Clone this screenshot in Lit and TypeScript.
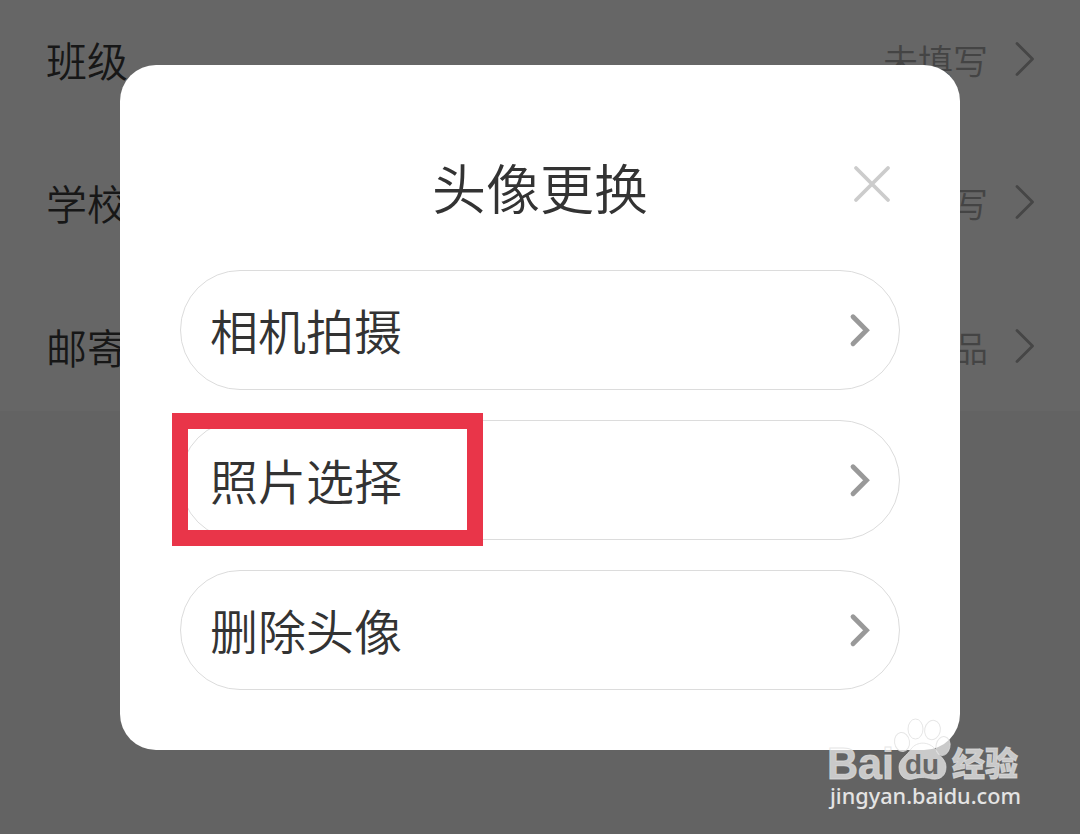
import { LitElement, html, css } from "lit";
import { customElement, property } from "lit/decorators.js";

@customElement("chevron-icon")
class ChevronIcon extends LitElement {
  @property({ type: Boolean }) bold = false;
  static styles = css`
    :host { display: block; flex: none; }
    svg { display: block; fill: none; stroke-linecap: round; stroke-linejoin: round; }
    .thin { stroke: #464646; stroke-width: 2.8; }
    .bold { stroke: #999; stroke-width: 4.8; stroke-linejoin: miter; }
  `;
  render() {
    return this.bold
      ? html`<svg class="bold" width="24" height="36" viewBox="0 0 24 36"><path d="M5 4.800 18.500 18.300 5 31.800" /></svg>`
      : html`<svg class="thin" width="20" height="36" viewBox="0 0 20 36"><path d="M3 2.500 18.500 18 3 33.500" /></svg>`;
  }
}

@customElement("profile-row")
class ProfileRow extends LitElement {
  @property() label = "";
  @property() value = "";
  static styles = css`
    :host { display: flex; flex: none; align-items: center; height: 143.5px; padding: 0 46px; color: #171717; font-size: 41px; }
    .label { flex: 1; }
    .value { color: #444; font-size: 35px; margin-right: 26px; padding-top: 1px; }
  `;
  render() {
    return html`<span class="label">${this.label}</span><span class="value">${this.value}</span><chevron-icon></chevron-icon>`;
  }
}

@customElement("option-pill")
class OptionPill extends LitElement {
  @property() label = "";
  @property({ type: Boolean }) marked = false;
  static styles = css`
    :host { display: block; position: relative; }
    .pill { box-sizing: border-box; display: flex; align-items: center; justify-content: space-between; width: 100%; height: 120px; padding: 0 27px 0 29px; border: 1px solid #dcdcdc; border-radius: 60px; background: #fff; color: #333; font: inherit; font-size: 48px; }
    .mark { position: absolute; left: -8px; top: -7px; box-sizing: border-box; width: 311px; height: 133px; border: 16px solid #e93549; }
    .text { line-height: 70px; padding-bottom: 2px; }
  `;
  render() {
    return html`<button class="pill"><span class="text">${this.label}</span><chevron-icon bold></chevron-icon></button>
      ${this.marked ? html`<div class="mark"></div>` : ""}`;
  }
}

@customElement("site-watermark")
class SiteWatermark extends LitElement {
  static styles = css`
    :host { display: block; }
    svg { display: block; overflow: visible; }
    .fill { fill: #fff; fill-opacity: .66; stroke: #dedede; stroke-opacity: .75; stroke-width: 1; }
    .latin { font: 700 44.5px "Liberation Sans", sans-serif; }
    .du { font: 700 27px "Liberation Sans", sans-serif; fill: #676767; }
    .han { font: 800 33px "Noto Sans CJK SC", sans-serif; }
    .url { font: 500 22.5px "Noto Sans", sans-serif; fill: #e4e4e4; }
  `;
  render() {
    return html`<svg width="220" height="134" viewBox="0 0 220 134">
      <text class="fill latin" x="7" y="78.500" textLength="67" lengthAdjust="spacingAndGlyphs">Bai</text>
      <g class="fill">
        <ellipse cx="82" cy="42" rx="7.500" ry="9.500" transform="rotate(-8 82 42)" />
        <ellipse cx="95.500" cy="29" rx="7.500" ry="10" />
        <ellipse cx="112.500" cy="30" rx="7.800" ry="9.800" transform="rotate(12 112.500 30)" />
        <ellipse cx="123" cy="46" rx="7" ry="9.500" transform="rotate(12 123 46)" />
        <path d="M91 49C97 41 109 41 116 50C119 56 126 59 126 67C126 76 120 80 112 79C105 77 99 77 93 79C85 81 79 76 79 67C79 59 87 56 91 49Z" />
      </g>
      <text class="du" x="85" y="73.500" textLength="34" lengthAdjust="spacingAndGlyphs">du</text>
      <text class="fill han" x="132" y="75.500" textLength="66" lengthAdjust="spacingAndGlyphs">经验</text>
      <text class="url" x="10" y="104" textLength="191" lengthAdjust="spacingAndGlyphs">jingyan.baidu.com</text>
    </svg>`;
  }
}

@customElement("app-root")
class AppRoot extends LitElement {
  static styles = css`
    :host { display: block; position: relative; box-sizing: border-box; width: 1080px; height: 834px; overflow: hidden; background: #636363; font-family: "Noto Sans CJK SC", sans-serif; font-weight: 350; }
    .list { display: flex; flex-direction: column; box-sizing: border-box; height: 411px; overflow: hidden; background: #666; }
    .first { margin-top: -13px; }
    .overlay { position: absolute; inset: 0; display: flex; justify-content: center; align-items: flex-start; padding-top: 65px; }
    .dialog { box-sizing: border-box; width: 840px; height: 685px; border-radius: 36px; background: #fff; padding: 75px 60px 0; }
    .head { display: grid; grid-template-columns: 60px 1fr 60px; align-items: center; height: 100px; margin-bottom: 30px; }
    .title { grid-column: 2; margin: 0 0 7px; text-align: center; color: #333; font-size: 54px; line-height: 80px; font-weight: inherit; }
    .close { justify-self: end; padding: 0; margin: 0 9px 12px 0; border: 0; background: none; }
    .close svg { display: block; fill: none; stroke: #ccc; stroke-width: 3.8; stroke-linecap: round; }
    .options { display: flex; flex-direction: column; gap: 30px; }
    .watermark { position: absolute; left: 820px; top: 700px; }
  `;
  render() {
    return html`
      <section class="list">
        <profile-row class="first" label="班级" value="未填写"></profile-row>
        <profile-row label="学校" value="未填写"></profile-row>
        <profile-row label="邮寄" value="品"></profile-row>
      </section>
      <div class="overlay">
        <div class="dialog" role="dialog">
          <header class="head">
            <h1 class="title">头像更换</h1>
            <button class="close" aria-label="关闭"><svg width="38" height="38" viewBox="0 0 38 38"><path d="M3 3 35 35M35 3 3 35" /></svg></button>
          </header>
          <div class="options">
            <option-pill label="相机拍摄"></option-pill>
            <option-pill label="照片选择" marked></option-pill>
            <option-pill label="删除头像"></option-pill>
          </div>
        </div>
      </div>
      <site-watermark class="watermark"></site-watermark>
    `;
  }
}
